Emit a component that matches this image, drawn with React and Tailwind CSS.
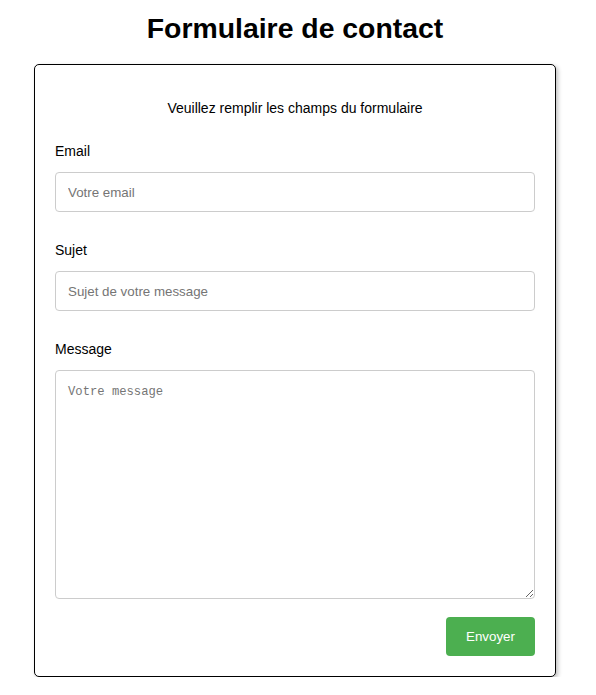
import React, { useState } from 'react';

// Simple contact form page
const Field = ({ label, children }) => (
    <div className="mb-[30px]">
        <label className="block text-[14px] leading-[16px] text-black mb-[13px]">{label}</label>
        {children}
    </div>
);

const App = () => {
    const [email, setEmail] = useState('');
    const [subject, setSubject] = useState('');
    const [message, setMessage] = useState('');

    const handleSubmit = (e) => {
        e.preventDefault();
    };

    return (
        <div className="w-[590px] bg-white font-['Liberation_Sans',Arial,sans-serif] text-black">
            <h1 className="pt-[12px] text-center text-[28.4px] leading-[32px] font-bold">
                Formulaire de contact
            </h1>

            <form
                onSubmit={handleSubmit}
                className="mx-auto mt-[20px] w-[522px] rounded-[5px] border border-black bg-white px-[20px] pt-[35px] pb-[20px] shadow-[2px_2px_4px_rgba(0,0,0,0.25)]"
            >
                <p className="text-center text-[14px] leading-[16px] mb-[27px]">
                    Veuillez remplir les champs du formulaire
                </p>

                <Field label="Email">
                    <input
                        type="email"
                        value={email}
                        onChange={(e) => setEmail(e.target.value)}
                        placeholder="Votre email"
                        className="block h-[40px] w-full rounded-[4px] border border-[#cccccc] px-[12px] text-[13.33px] outline-none placeholder:text-[#757575]"
                    />
                </Field>

                <Field label="Sujet">
                    <input
                        type="text"
                        value={subject}
                        onChange={(e) => setSubject(e.target.value)}
                        placeholder="Sujet de votre message"
                        className="block h-[40px] w-full rounded-[4px] border border-[#cccccc] px-[12px] text-[13.33px] outline-none placeholder:text-[#757575]"
                    />
                </Field>

                <div>
                    <label className="block text-[14px] leading-[16px] text-black mb-[13px]">Message</label>
                    <textarea
                        value={message}
                        onChange={(e) => setMessage(e.target.value)}
                        placeholder="Votre message"
                        className="block h-[229px] w-full resize rounded-[4px] border border-[#cccccc] px-[12px] pt-[14px] pb-[12px] font-['Liberation_Mono',monospace] text-[12.2px] leading-[15px] outline-none placeholder:text-[#757575]"
                    />
                </div>

                <div className="mt-[18px] flex justify-end">
                    <button
                        type="submit"
                        className="h-[39px] w-[89px] rounded-[4px] bg-[#4caf50] text-[13.33px] text-white"
                    >
                        Envoyer
                    </button>
                </div>
            </form>
        </div>
    );
};

export default App;
